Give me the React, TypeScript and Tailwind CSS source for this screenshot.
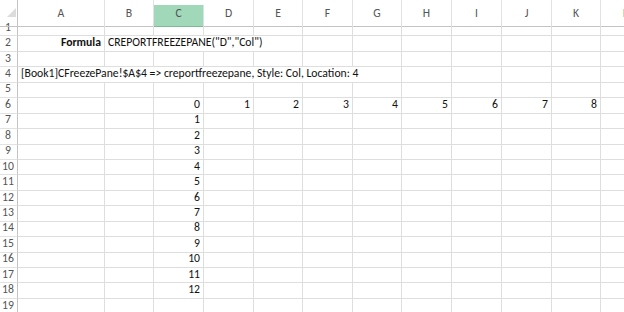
import { Fragment } from 'react'

const LETTERS = ['A', 'B', 'C', 'D', 'E', 'F', 'G', 'H', 'I', 'J', 'K', 'L']

type Cell = { span: number; text?: string; align?: 'left' | 'right'; bold?: boolean }

const rowCells = (row: number): Cell[] => {
  const empty = (n: number): Cell[] => Array.from({ length: n }, () => ({ span: 1 }))
  if (row === 2)
    return [
      { span: 1, text: 'Formula', align: 'right', bold: true },
      { span: 4, text: 'CREPORTFREEZEPANE("D","Col")' },
      ...empty(7),
    ]
  if (row === 4)
    return [{ span: 7, text: '[Book1]CFreezePane!$A$4 => creportfreezepane, Style: Col, Location: 4' }, ...empty(5)]
  if (row === 6)
    return [
      ...empty(2),
      ...[0, 1, 2, 3, 4, 5, 6, 7, 8].map(n => ({ span: 1, text: String(n), align: 'right' as const })),
      ...empty(1),
    ]
  if (row >= 7 && row <= 18)
    return [...empty(2), { span: 1, text: String(row - 6), align: 'right' }, ...empty(9)]
  return empty(12)
}

const SPAN: Record<number, string> = { 1: 'col-span-1', 4: 'col-span-4', 7: 'col-span-7' }

export default function App() {
  const rows = Array.from({ length: 19 }, (_, i) => i + 1)
  return (
    <div className="w-[624px] h-[312px] overflow-hidden bg-white font-['Carlito','Calibri','Lato',sans-serif] text-[11.7px] text-[#111]">
      <div className="w-[651px]">
        {/* Column headers */}
        <div className="grid grid-cols-[18px_87px_49px_50px_50px_49px_50px_49px_50px_50px_50px_49px_50px] h-[21px]">
          <div className="relative border-r border-b border-[#c4c4c4]">
            <svg width="9" height="9" className="absolute left-[7px] top-[8px]">
              <polygon points="9,0 9,9 0,9" fill="#dcdcdc" />
            </svg>
          </div>
          {LETTERS.map(l => (
            <div
              key={l}
              className={`flex items-end justify-center pb-[3px] border-b text-[#555] ${
                l === 'C'
                  ? 'bg-[#a0d8b9] border-b-[#7fb995] border-r border-r-[#cfe8da] mt-[5px] text-[#2e5a40]'
                  : 'border-r border-r-[#e2e2e2] border-b-[#c4c4c4]'
              }`}
            >
              {l}
            </div>
          ))}
        </div>

        {rows.map(r => (
          <div
            key={r}
            className="grid grid-cols-[18px_87px_49px_50px_50px_49px_50px_49px_50px_50px_50px_49px_50px] h-[15.45px]"
          >
            <div className="flex items-end justify-center pb-[2px] pr-[1px] border-r border-r-[#c4c4c4] border-b border-b-[#e2e2e2] text-[#555] leading-none">
              {r}
            </div>
            {rowCells(r).map((c, i) => (
              <Fragment key={i}>
                <div
                  className={`${SPAN[c.span]} flex items-end pb-[2px] px-[3px] border-r border-b border-[#dedede] whitespace-nowrap leading-none ${
                    c.align === 'right' ? 'justify-end' : 'justify-start'
                  } ${c.bold ? 'font-bold' : ''}`}
                >
                  {c.text}
                </div>
              </Fragment>
            ))}
          </div>
        ))}
      </div>
    </div>
  )
}
